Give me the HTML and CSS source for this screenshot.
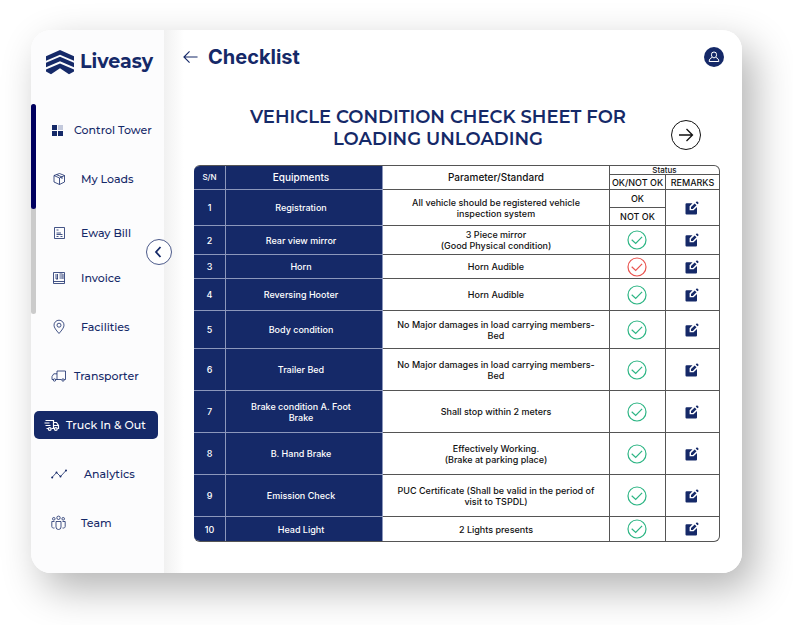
FILE: index.html
```html
<!DOCTYPE html>
<html lang="en">
<head>
<meta charset="utf-8">
<meta name="viewport" content="width=device-width, initial-scale=1">
<title>Liveasy - Checklist</title>
<link rel="stylesheet" href="styles.css">
</head>
<body>
<svg class="sprite" aria-hidden="true">
  <symbol id="ok" viewBox="0 0 20 20"><circle cx="10" cy="10" r="9" fill="none" stroke="currentColor" stroke-width="1.2"/><path d="M4.7 9.7l4 3.7 6.4-6.6" fill="none" stroke="currentColor" stroke-width="1.2"/></symbol>
  <symbol id="edit" viewBox="0 0 14 14"><path d="M1.600 2.200H7.500L4.600 5.200V9.200H8.600L12 5.900V12.400a1.100 1.100 0 0 1-1.100 1.100H1.600A1.100 1.100 0 0 1 .5 12.400V3.300A1.100 1.100 0 0 1 1.600 2.200z" fill="currentColor"/><path d="M6 7.900V6.100L9.700 2.400l1.800 1.800-3.700 3.700zM10.700 1.500l.9-.9q.4-.4.8 0l1 1q.4.400 0 .8l-.9.9z" fill="currentColor"/></symbol>
</svg>
<div class="app">
  <aside class="sidebar">
    <a class="brand" href="#">
      <svg class="brand-mark" viewBox="0 0 28 25" aria-hidden="true"><path d="M14 0L28 6.200v4.500L14 4.700 0 10.700V6.200zM14 6.700l14 6v4.600l-14-6-14 6v-4.600zM14 13.400l14 6v2L23 24.200 14 18.200 5 24.200 0 21.400v-2z" fill="currentColor"/></svg>
      <span>Liveasy</span>
    </a>
    <div class="scroll-track"><div class="scroll-thumb"></div></div>
    <nav class="nav">
      <div class="nav-group">
        <a class="nav-item nav-item--tight" href="#">
          <svg viewBox="0 0 16 16" aria-hidden="true"><path d="M1 3h5v5H1zM1 9h5v5H1zM7 9h5v5H7z" fill="currentColor"/><path d="M7 3h5v5H7z" fill="#c3c9dc"/></svg>Control Tower</a>
        <a class="nav-item" href="#">
          <svg class="line" viewBox="0 0 16 16" aria-hidden="true"><path d="M3 4.500L8.500 2.500 13.500 4.500V11L8.500 13.500 3 11zM3 4.500L8.500 7l5-2.500M8.500 7v6.500M5.500 3.600L11 6v2"/></svg>My Loads</a>
      </div>
      <div class="nav-group nav-group--documents">
        <a class="nav-item" href="#">
          <svg class="line" viewBox="0 0 16 16" aria-hidden="true"><path d="M3.500 2.500h10v11h-10zM5.500 5h2M5.500 8h4.500M5.500 9.500h6M5.500 11.500h2M9.500 11.500h2"/></svg>Eway Bill</a>
        <a class="nav-item" href="#">
          <svg class="line" viewBox="0 0 16 16" aria-hidden="true"><path d="M2.500 2.500h11v11h-11zM2.500 11.500h11M5 4v5M6.500 4v5M8.500 4h3M8.500 6h3M8.500 8h3M12 4v5M5 9h2"/></svg>Invoice</a>
      </div>
      <div class="nav-group">
        <a class="nav-item" href="#">
          <svg class="line" viewBox="0 0 16 16" aria-hidden="true"><path d="M8 14.500C5 11 3 8.500 3 6.200a5 5 0 0 1 10 0C13 8.500 11 11 8 14.500z"/><circle cx="8" cy="6.200" r="2"/></svg>Facilities</a>
        <a class="nav-item nav-item--tight" href="#">
          <svg class="line" viewBox="0 0 16 16" aria-hidden="true"><path d="M6 11.500V3h8.500v8.500h-1.300M10.500 11.500H4.800M2.300 11.500H1V8.500L2.800 5.800H6"/><circle cx="3.500" cy="12" r="1.200"/><circle cx="12" cy="12" r="1.200"/></svg>Transporter</a>
        <a class="nav-item nav-item--active" href="#" aria-current="page">
          <svg class="line" viewBox="0 0 16 16" aria-hidden="true"><path d="M1.500 3.500H9.500V11.500H7.500M9.500 5.500H12.500L14.500 8.500V11.500H13.500M.5 6h5M1.500 8.500h5M2.500 11.500h1.500M9.500 8.500H14.500"/><circle cx="5.700" cy="12" r="1.400"/><circle cx="11.800" cy="12" r="1.400"/></svg>Truck In &amp; Out</a>
        <a class="nav-item nav-item--wide" href="#">
          <svg class="line" viewBox="0 0 16 16" aria-hidden="true"><path d="M1 11.500L5.500 6.500l4 4L15 4.500"/><g fill="currentColor" stroke="none"><circle cx="1.200" cy="11.500" r="1"/><circle cx="5.500" cy="6.500" r="1"/><circle cx="9.500" cy="10.500" r="1"/><circle cx="15" cy="4.500" r="1"/></g></svg>Analytics</a>
        <a class="nav-item" href="#">
          <svg class="line" viewBox="0 0 16 16" aria-hidden="true"><circle cx="7.500" cy="2.800" r="1.700"/><circle cx="2.800" cy="3.800" r="1.300"/><circle cx="12.200" cy="3.800" r="1.300"/><path d="M5 6.500h5v5.500a2.500 2.500 0 0 1-5 0zM3.500 6.500H.8V11.500c0 1 1 1.800 2.700 1.500M11.500 6.500h2.700V11.500c0 1-1 1.800-2.700 1.500"/></svg>Team</a>
      </div>
    </nav>
    <button class="collapse" type="button" aria-label="Collapse menu">
      <svg viewBox="0 0 12 12" aria-hidden="true"><path d="M7.500 1L3 6l4.500 5" fill="none" stroke="currentColor" stroke-width="1.800"/></svg>
    </button>
  </aside>
  <main class="main">
    <header class="topbar">
      <a class="back" href="#" aria-label="Back"><svg viewBox="0 0 16 14" aria-hidden="true"><path d="M15.500 7H1.200M7 1L1 7l6 6" fill="none" stroke="currentColor" stroke-width="1.200"/></svg></a>
      <h1>Checklist</h1>
      <button class="profile" type="button" aria-label="Profile">
        <svg viewBox="0 0 12 12" aria-hidden="true"><path d="M6 1a2.500 2.500 0 0 1 2.500 2.800C8.500 5.500 7.500 6.800 6 6.800S3.500 5.500 3.500 3.800A2.500 2.500 0 0 1 6 1zM4.300 6.400C2.300 7 1.200 8.300 1.200 10.500h9.600C10.800 8.300 9.700 7 7.700 6.400" fill="none" stroke="currentColor"/></svg>
      </button>
    </header>
    <div class="sheet-head">
      <h2>VEHICLE CONDITION CHECK SHEET FOR<br>LOADING UNLOADING</h2>
      <button class="next" type="button" aria-label="Next"><svg viewBox="0 0 16 14" aria-hidden="true"><path d="M1 7h13.500M8.500 1l6 6-6 6" fill="none" stroke="currentColor" stroke-width="1.300"/></svg></button>
    </div>
    <table class="sheet">
      <colgroup><col class="c-sn"><col class="c-equip"><col><col class="c-ok"><col class="c-remarks"></colgroup>
      <thead>
        <tr class="h-status"><th class="navy sn" rowspan="2">S/N</th><th class="navy equip" rowspan="2">Equipments</th><th rowspan="2">Parameter/Standard</th><th class="status last" colspan="2">Status</th></tr>
        <tr class="h-sub"><th class="sub">OK/NOT OK</th><th class="sub last">REMARKS</th></tr>
      </thead>
      <tbody>
        <tr class="h-half"><td class="navy" rowspan="2">1</td><td class="navy equip" rowspan="2">Registration</td><td rowspan="2">All vehicle should be registered vehicle<br>inspection system</td><td>OK</td><td class="last" rowspan="2"><button class="edit" type="button" aria-label="Edit remark 1"><svg><use href="#edit"/></svg></button></td></tr>
        <tr class="h-half"><td>NOT OK</td></tr>
        <tr class="h-medium"><td class="navy">2</td><td class="navy equip">Rear view mirror</td><td>3 Piece mirror<br>(Good Physical condition)</td><td><svg class="mark" role="img" aria-label="OK"><use href="#ok"/></svg></td><td class="last"><button class="edit" type="button" aria-label="Edit remark 2"><svg><use href="#edit"/></svg></button></td></tr>
        <tr class="h-short"><td class="navy">3</td><td class="navy equip">Horn</td><td>Horn Audible</td><td><svg class="mark mark--bad" role="img" aria-label="Not OK"><use href="#ok"/></svg></td><td class="last"><button class="edit" type="button" aria-label="Edit remark 3"><svg><use href="#edit"/></svg></button></td></tr>
        <tr class="h-regular"><td class="navy">4</td><td class="navy equip">Reversing Hooter</td><td>Horn Audible</td><td><svg class="mark" role="img" aria-label="OK"><use href="#ok"/></svg></td><td class="last"><button class="edit" type="button" aria-label="Edit remark 4"><svg><use href="#edit"/></svg></button></td></tr>
        <tr class="h-large"><td class="navy">5</td><td class="navy equip">Body condition</td><td>No Major damages in load carrying members-<br>Bed</td><td><svg class="mark" role="img" aria-label="OK"><use href="#ok"/></svg></td><td class="last"><button class="edit" type="button" aria-label="Edit remark 5"><svg><use href="#edit"/></svg></button></td></tr>
        <tr class="h-tall"><td class="navy">6</td><td class="navy equip">Trailer Bed</td><td>No Major damages in load carrying members-<br>Bed</td><td><svg class="mark" role="img" aria-label="OK"><use href="#ok"/></svg></td><td class="last"><button class="edit" type="button" aria-label="Edit remark 6"><svg><use href="#edit"/></svg></button></td></tr>
        <tr class="h-tall"><td class="navy">7</td><td class="navy equip">Brake condition A. Foot<br>Brake</td><td>Shall stop within 2 meters</td><td><svg class="mark" role="img" aria-label="OK"><use href="#ok"/></svg></td><td class="last"><button class="edit" type="button" aria-label="Edit remark 7"><svg><use href="#edit"/></svg></button></td></tr>
        <tr class="h-tall"><td class="navy">8</td><td class="navy equip">B. Hand Brake</td><td>Effectively Working.<br>(Brake at parking place)</td><td><svg class="mark" role="img" aria-label="OK"><use href="#ok"/></svg></td><td class="last"><button class="edit" type="button" aria-label="Edit remark 8"><svg><use href="#edit"/></svg></button></td></tr>
        <tr class="h-tall"><td class="navy">9</td><td class="navy equip">Emission Check</td><td>PUC Certificate (Shall be valid in the period of<br>visit to TSPDL)</td><td><svg class="mark" role="img" aria-label="OK"><use href="#ok"/></svg></td><td class="last"><button class="edit" type="button" aria-label="Edit remark 9"><svg><use href="#edit"/></svg></button></td></tr>
        <tr class="h-short"><td class="navy">10</td><td class="navy equip">Head Light</td><td>2 Lights presents</td><td><svg class="mark" role="img" aria-label="OK"><use href="#ok"/></svg></td><td class="last"><button class="edit" type="button" aria-label="Edit remark 10"><svg><use href="#edit"/></svg></button></td></tr>
      </tbody>
    </table>
  </main>
</div>
</body>
</html>
```
FILE: styles.css
```css
:root {
  --navy: #152968;
  --line: #555;
}

* { box-sizing: border-box; }

body {
  margin: 0;
  background: #fff;
  color: #111;
  font-family: Inter, "Liberation Sans", sans-serif;
}

a { color: inherit; text-decoration: none; }
button { padding: 0; border: 0; background: none; color: inherit; cursor: pointer; }
svg { display: block; }
.sprite { position: absolute; width: 0; height: 0; }

.app {
  display: flex;
  margin: 30px 51px 52px 31px;
  border-radius: 20px;
  background: #fff;
  box-shadow: 12px 16px 40px rgba(0, 0, 0, 0.3);
}

/* Sidebar */
.sidebar {
  position: relative;
  flex: none;
  width: 133px;
  border-radius: 20px 0 0 20px;
  background: #fcfcfd;
  color: var(--navy);
}

.brand {
  display: flex;
  align-items: center;
  gap: 6px;
  padding: 19px 0 0 15px;
  font-family: Montserrat, Inter, sans-serif;
  font-size: 19px;
  line-height: 26px;
  font-weight: 700;
}
.brand-mark { width: 28px; height: 25px; }

.scroll-track {
  position: absolute;
  top: 74px;
  left: 0;
  width: 5px;
  height: 210px;
  border-radius: 3px;
  background: #cbcbcb;
}
.scroll-thumb { height: 50%; border-radius: 3px; background: #00005f; }

.nav {
  display: flex;
  flex-direction: column;
  padding: 41px 6px 0 3px;
  font-family: Montserrat, Inter, sans-serif;
}
.nav-group { display: flex; flex-direction: column; gap: 21px; }
.nav-group--documents { gap: 17px; margin: 26px 0 21px; }

.nav-item {
  display: flex;
  align-items: center;
  gap: 14px;
  height: 28px;
  padding-left: 17px;
  border-radius: 5px;
  font-size: 11px;
  line-height: 16px;
  font-weight: 500;
  white-space: nowrap;
}
.nav-item svg { flex: none; width: 16px; height: 16px; }
.nav-item--tight { gap: 7px; }
.nav-item--wide { gap: 17px; }
.nav-item--active { gap: 6px; padding-left: 10px; background: var(--navy); color: #fff; }
.line { fill: none; stroke: currentColor; stroke-width: 0.8; }
.nav-item--active .line { stroke-width: 1.2; }

.collapse {
  position: absolute;
  top: 209px;
  right: -8px;
  display: grid;
  place-items: center;
  width: 26px;
  height: 26px;
  border: 1px solid #4c5a8a;
  border-radius: 50%;
  background: #fff;
}
.collapse svg { width: 12px; height: 12px; }

/* Content */
.main {
  flex: 1;
  min-width: 0;
  padding: 14px 22px 31px 30px;
  border-radius: 0 20px 20px 0;
  background: linear-gradient(to right, #f1f1f1, #fff 20px);
}

.topbar {
  display: flex;
  align-items: center;
  gap: 10px;
  margin: 0 -4px 0 -11px;
  color: var(--navy);
}
.back svg { width: 15px; height: 14px; }
.topbar h1 { margin: 0; font-size: 20px; line-height: 26px; font-weight: 700; }
.profile {
  display: grid;
  place-items: center;
  width: 20px;
  height: 20px;
  margin-left: auto;
  border-radius: 50%;
  background: var(--navy);
  color: #fff;
}
.profile svg { width: 12px; height: 12px; }

.sheet-head {
  display: flex;
  align-items: flex-end;
  justify-content: space-between;
  padding: 36px 19px 15px 56px;
}
.sheet-head h2 {
  margin: 0;
  color: var(--navy);
  font-family: Montserrat, Inter, sans-serif;
  font-size: 18px;
  line-height: 22px;
  font-weight: 600;
  text-align: center;
  white-space: nowrap;
}
.next {
  display: grid;
  place-items: center;
  width: 30px;
  height: 30px;
  border: 1px solid #111;
  border-radius: 50%;
}
.next svg { width: 16px; height: 14px; }

/* Check sheet */
.sheet {
  width: 100%;
  table-layout: fixed;
  border: 1px solid var(--line);
  border-left: 0;
  border-radius: 6px;
  border-spacing: 0;
  overflow: hidden;
  font-size: 9px;
  line-height: 11px;
}
.c-sn { width: 32px; }
.c-equip { width: 157px; }
.c-ok { width: 56px; }
.c-remarks { width: 53px; }

.sheet th,
.sheet td {
  padding: 0;
  border-right: 1px solid var(--line);
  border-bottom: 1px solid var(--line);
  font-weight: 500;
  text-align: center;
  vertical-align: middle;
}
.sheet th { font-size: 10px; }
.sheet .sub { font-size: 9px; white-space: nowrap; }
.sheet .sn { font-size: 8px; }
.sheet .status { font-size: 8px; line-height: 8px; }
.sheet .navy { border-color: #8c97bb; background: var(--navy); color: #fff; }
.sheet .equip { padding-right: 6px; }
.sheet .last { border-right: 0; }
.sheet tbody tr:last-child td { border-bottom: 0; }

.h-status { height: 9px; }
.h-sub { height: 15px; }
.h-half { height: 18px; }
.h-short { height: 24px; }
.h-medium { height: 29px; }
.h-regular { height: 32px; }
.h-large { height: 38px; }
.h-tall { height: 42px; }

.mark { width: 20px; height: 20px; margin: 0 auto; color: #2db584; }
.mark--bad { color: #e9544f; }
.edit { display: block; margin: 0 auto; color: var(--navy); }
.edit svg { width: 14px; height: 14px; }
```
